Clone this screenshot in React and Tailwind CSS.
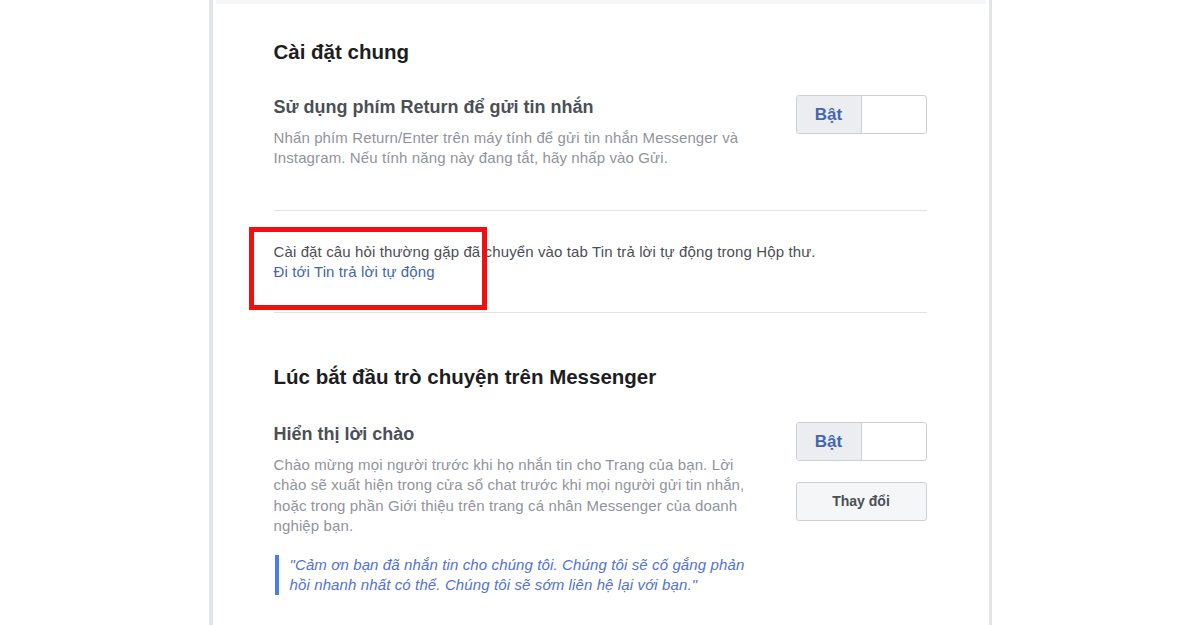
export default function App() {
  return (
    <div className="min-h-[625px] bg-white font-['Liberation_Sans',Arial,sans-serif] overflow-hidden">
      <div className="relative mx-auto w-[783px] min-h-[625px] bg-white border-l-[4px] border-r-[3px] border-[#e3e4e8]">
        <div className="mx-[3px] h-[4px] bg-[#f5f6f7]" />

        <div className="pl-[61px] pr-[62px] pt-[36px]">
          {/* Cài đặt chung */}
          <h2 className="text-[20.5px] leading-[24px] font-bold text-[#1c1e21]">Cài đặt chung</h2>

          <div className="mt-[31px] flex items-start justify-between">
            <div className="w-[480px]">
              <h3 className="mt-[1px] text-[18px] leading-[22px] font-bold text-[#4b4f56]">
                Sử dụng phím Return để gửi tin nhắn
              </h3>
              <p className="mt-[10px] text-[15px] leading-[20px] tracking-[0.12px] text-[#90949c]">
                Nhấn phím Return/Enter trên máy tính để gửi tin nhắn Messenger và Instagram. Nếu tính năng này đang tắt, hãy nhấp vào Gửi.
              </p>
            </div>
            <Toggle />
          </div>

          <div className="mt-[42px] h-[1px] bg-[#e1e3e6]" />

          <div className="pt-[31px] pb-[30px] text-[15px] leading-[20px] tracking-[0.12px]">
            <p className="text-[#4b4f56]">
              Cài đặt câu hỏi thường gặp đã chuyển vào tab Tin trả lời tự động trong Hộp thư.
            </p>
            <a href="#" className="text-[#4267b2]">Đi tới Tin trả lời tự động</a>
          </div>

          <div className="h-[1px] bg-[#e1e3e6]" />

          {/* Lúc bắt đầu trò chuyện */}
          <h2 className="mt-[52px] text-[20.5px] leading-[24px] font-bold text-[#1c1e21]">
            Lúc bắt đầu trò chuyện trên Messenger
          </h2>

          <div className="mt-[33px] flex items-start justify-between">
            <div className="w-[480px]">
              <h3 className="mt-[1px] text-[18px] leading-[22px] font-bold text-[#4b4f56]">Hiển thị lời chào</h3>
              <p className="mt-[10px] text-[15px] leading-[20.3px] tracking-[0.12px] text-[#90949c]">
                Chào mừng mọi người trước khi họ nhắn tin cho Trang của bạn. Lời chào sẽ xuất hiện trong cửa sổ chat trước khi mọi người gửi tin nhắn, hoặc trong phần Giới thiệu trên trang cá nhân Messenger của doanh nghiệp bạn.
              </p>
              <div className="mt-[19px] ml-[1px] border-l-[4px] border-[#4a7de6] pl-[11px] text-[15px] leading-[20px] tracking-[0.12px] italic text-[#5272d4]">
                "Cảm ơn bạn đã nhắn tin cho chúng tôi. Chúng tôi sẽ cố gắng phản hồi nhanh nhất có thể. Chúng tôi sẽ sớm liên hệ lại với bạn."
              </div>
            </div>
            <div className="flex flex-col">
              <Toggle />
              <button className="mt-[21px] h-[39px] w-[131px] rounded-[3px] border border-[#ccd0d5] bg-[#f5f6f7] text-[14px] font-bold text-[#4b4f56]">
                Thay đổi
              </button>
            </div>
          </div>
        </div>

        {/* annotation box */}
        <div className="absolute left-[36px] top-[227px] h-[83px] w-[238px] border-[5px] border-[#f01010]" />
      </div>
    </div>
  )
}

function Toggle() {
  return (
    <div className="flex h-[39px] w-[131px] overflow-hidden rounded-[3px] border border-[#ccd0d5] bg-white">
      <div className="flex w-[65px] items-center justify-center border-r border-[#ccd0d5] bg-[#ebedf0] text-[17px] font-bold text-[#4267b2]">
        Bật
      </div>
      <div className="flex-1" />
    </div>
  )
}
